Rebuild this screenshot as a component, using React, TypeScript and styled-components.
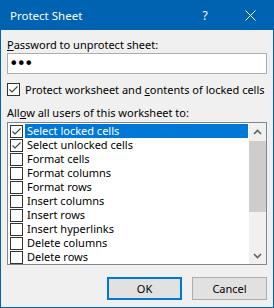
import React from "react";
import styled, { createGlobalStyle } from "styled-components";

const Global = createGlobalStyle`
  html, body { margin: 0; padding: 0; background: #ffffff; }
  body {
    font-family: "Noto Sans", "Open Sans", sans-serif;
    font-size: 11px;
    color: #000000;
  }
`;

const Window = styled.div`
  width: 274px;
  height: 308px;
  box-sizing: border-box;
  background: #0063b1;
  padding: 0 1px 1px 1px;
  display: flex;
  flex-direction: column;
`;

const TitleBar = styled.div`
  height: 30px;
  flex-shrink: 0;
  display: flex;
  align-items: center;
  color: #ffffff;
`;

const TitleText = styled.div`
  flex: 1;
  padding-left: 9px;
  font-size: 11.5px;
  line-height: 15px;
`;

const TitleButton = styled.div<{ $w: number }>`
  width: ${(p) => p.$w}px;
  height: 30px;
  display: flex;
  align-items: center;
  justify-content: center;
  font-size: 12px;
`;

const Body = styled.div`
  flex: 1;
  background: #f0f0f0;
  padding: 7px 6px 0 6px;
  display: flex;
  flex-direction: column;
`;

const Label = styled.div<{ $mt?: number }>`
  height: 15px;
  line-height: 15px;
  white-space: nowrap;
  margin-top: ${(p) => p.$mt ?? 0}px;
`;

const Key = styled.span`
  text-decoration: underline;
`;

const PasswordInput = styled.input`
  margin: 1px 0 0 0;
  height: 21px;
  width: 100%;
  box-sizing: border-box;
  border: 1px solid #adadad;
  background: #ffffff;
  padding: 0 1px;
  font-family: "DejaVu Sans", sans-serif;
  font-size: 16px;
  letter-spacing: -2px;
  color: #000;
  outline: none;
`;

const CheckRow = styled.div`
  margin-top: 8px;
  height: 15px;
  display: flex;
  align-items: center;
  gap: 5px;
  white-space: nowrap;
  line-height: 15px;
`;

const Box = styled.span`
  width: 13px;
  height: 13px;
  box-sizing: border-box;
  border: 1px solid #333333;
  background: #ffffff;
  flex-shrink: 0;
  display: flex;
`;

const List = styled.div`
  margin-top: 2px;
  height: 143px;
  box-sizing: border-box;
  border: 1px solid #828790;
  background: #ffffff;
  display: flex;
`;

const Rows = styled.div`
  flex: 1;
  overflow: hidden;
  padding: 1px 1px 0 2px;
`;

const Row = styled.div`
  height: 14px;
  display: flex;
  align-items: center;
  gap: 2px;
`;

const RowLabel = styled.span<{ $sel: boolean }>`
  flex: 1;
  height: 14px;
  line-height: 14px;
  padding-left: 2px;
  white-space: nowrap;
  background: ${(p) => (p.$sel ? "#0078d7" : "transparent")};
  color: ${(p) => (p.$sel ? "#ffffff" : "#000000")};
`;

const ScrollBar = styled.div`
  width: 17px;
  background: #f0f0f0;
  display: flex;
  flex-direction: column;
`;

const ArrowButton = styled.div`
  height: 17px;
  display: flex;
  align-items: center;
  justify-content: center;
`;

const Track = styled.div`
  flex: 1;
  padding-top: 1px;
`;

const Thumb = styled.div`
  height: 71px;
  background: #cdcdcd;
`;

const ButtonRow = styled.div`
  margin-top: 12px;
  display: flex;
  justify-content: flex-end;
  gap: 10px;
`;

const Button = styled.button<{ $default?: boolean }>`
  width: 75px;
  height: 23px;
  box-sizing: border-box;
  background: #e1e1e1;
  border: ${(p) => (p.$default ? "2px solid #0078d7" : "1px solid #adadad")};
  font-family: "Noto Sans", "Open Sans", sans-serif;
  font-size: 11px;
  color: #000;
  padding: 0;
  line-height: 15px;
`;

const Check = ({ on }: { on: boolean }) => (
  <Box>
    {on && (
      <svg width="11" height="11" viewBox="0 0 11 11">
        <path d="M1.5 5.5 L4 8 L9.5 2.5" fill="none" stroke="#404040" strokeWidth="1.1" />
      </svg>
    )}
  </Box>
);

const Chevron = ({ up }: { up: boolean }) => (
  <svg width="9" height="6" viewBox="0 0 9 6">
    <path
      d={up ? "M1 5 L4.5 1.5 L8 5" : "M1 1 L4.5 4.5 L8 1"}
      fill="none"
      stroke="#606060"
      strokeWidth="1.6"
    />
  </svg>
);

const items = [
  "Select locked cells",
  "Select unlocked cells",
  "Format cells",
  "Format columns",
  "Format rows",
  "Insert columns",
  "Insert rows",
  "Insert hyperlinks",
  "Delete columns",
  "Delete rows",
];

export default function App() {
  return (
    <>
      <Global />
      <Window>
        <TitleBar>
          <TitleText>Protect Sheet</TitleText>
          <TitleButton $w={46}>?</TitleButton>
          <TitleButton $w={45}>
            <svg width="11" height="11" viewBox="0 0 11 11">
              <path d="M0.5 0.5 L10.5 10.5 M10.5 0.5 L0.5 10.5" stroke="#fff" strokeWidth="1" />
            </svg>
          </TitleButton>
        </TitleBar>
        <Body>
          <Label>
            <Key>P</Key>assword to unprotect sheet:
          </Label>
          <PasswordInput type="password" value="abc" readOnly />
          <CheckRow>
            <Check on={true} />
            <span>
              Protect worksheet and <Key>c</Key>ontents of locked cells
            </span>
          </CheckRow>
          <Label $mt={8}>
            All<Key>o</Key>w all users of this worksheet to:
          </Label>
          <List>
            <Rows>
              {items.map((t, i) => (
                <Row key={t}>
                  <Check on={i < 2} />
                  <RowLabel $sel={i === 0}>{t}</RowLabel>
                </Row>
              ))}
            </Rows>
            <ScrollBar>
              <ArrowButton>
                <Chevron up={true} />
              </ArrowButton>
              <Track>
                <Thumb />
              </Track>
              <ArrowButton>
                <Chevron up={false} />
              </ArrowButton>
            </ScrollBar>
          </List>
          <ButtonRow>
            <Button $default>OK</Button>
            <Button>Cancel</Button>
          </ButtonRow>
        </Body>
      </Window>
    </>
  );
}
